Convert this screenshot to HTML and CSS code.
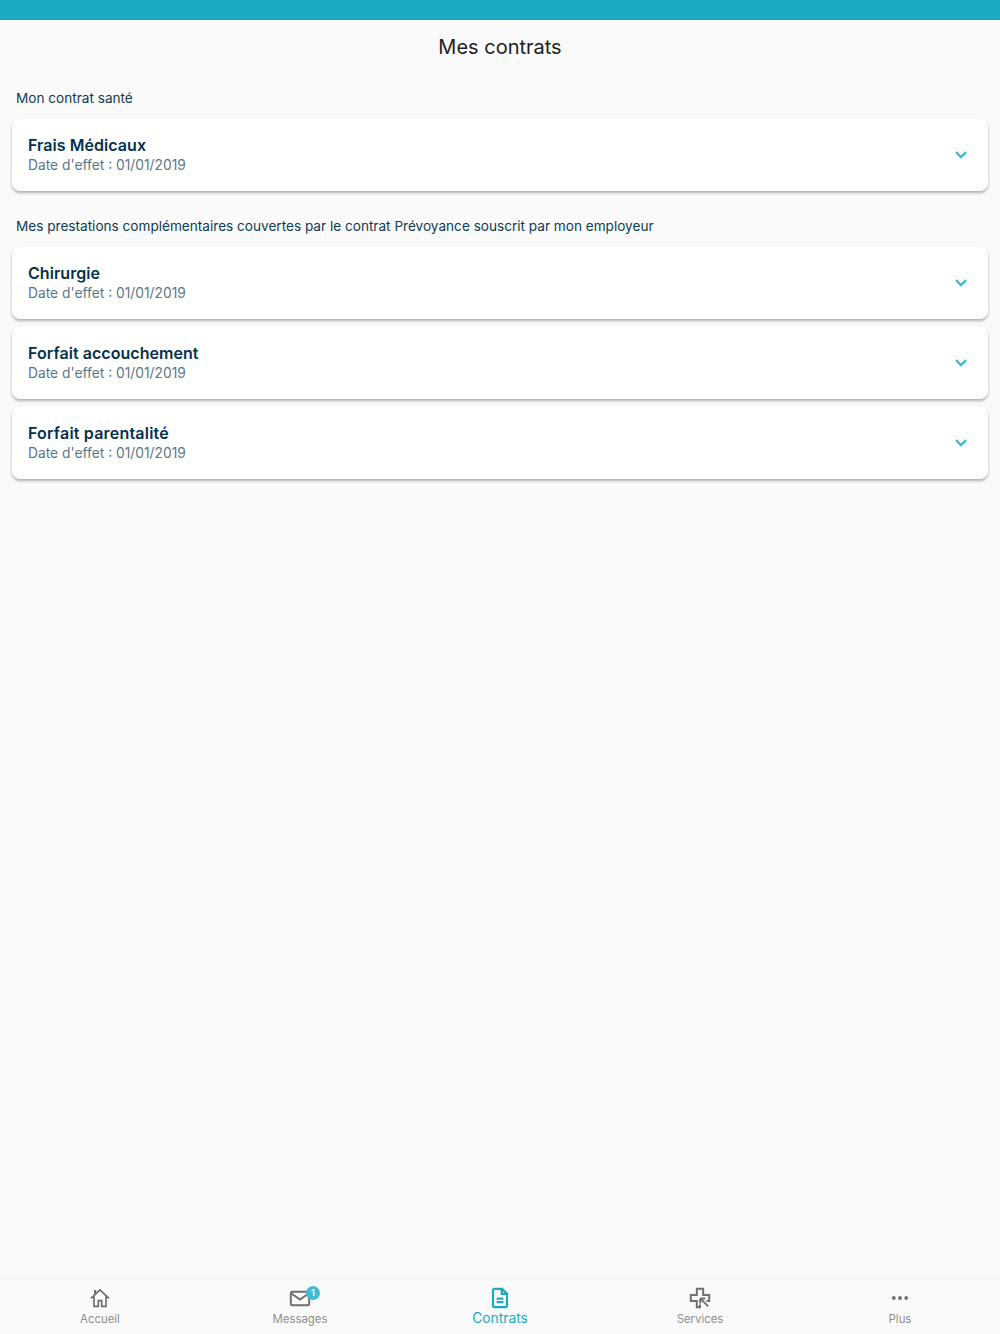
FILE: index.html
```html
<!DOCTYPE html>
<html lang="fr">
<head>
    <meta charset="UTF-8">
    <meta name="viewport" content="width=device-width, initial-scale=1.0">
    <title>Mes contrats</title>
    <link rel="stylesheet" href="styles.css">
</head>
<body>
    <div class="status-bar"></div>
    <header class="page-header">
        <h1>Mes contrats</h1>
    </header>
    <main class="content">
        <!-- Contrat santé -->
        <h2 class="section-label">Mon contrat santé</h2>
        <div class="card">
            <div class="card-text">
                <h3>Frais Médicaux</h3>
                <p>Date d'effet : 01/01/2019</p>
            </div>
            <svg class="chevron" viewBox="0 0 12 8"><path d="M1 1.200 6 6l5-4.800"/></svg>
        </div>

        <!-- Prévoyance -->
        <h2 class="section-label section-label-next">Mes prestations complémentaires couvertes par le contrat Prévoyance souscrit par mon employeur</h2>
        <div class="card">
            <div class="card-text">
                <h3>Chirurgie</h3>
                <p>Date d'effet : 01/01/2019</p>
            </div>
            <svg class="chevron" viewBox="0 0 12 8"><path d="M1 1.200 6 6l5-4.800"/></svg>
        </div>
        <div class="card">
            <div class="card-text">
                <h3>Forfait accouchement</h3>
                <p>Date d'effet : 01/01/2019</p>
            </div>
            <svg class="chevron" viewBox="0 0 12 8"><path d="M1 1.200 6 6l5-4.800"/></svg>
        </div>
        <div class="card">
            <div class="card-text">
                <h3 class="title-wide">Forfait parentalité</h3>
                <p>Date d'effet : 01/01/2019</p>
            </div>
            <svg class="chevron" viewBox="0 0 12 8"><path d="M1 1.200 6 6l5-4.800"/></svg>
        </div>
    </main>
    <nav class="tabs">
        <a href="#" class="tab">
            <span class="tab-icon">
                <svg class="thin" viewBox="0 0 24 24"><path d="M3 12.400 12 3.900l9 8.500M6 10v10.300h4.300v-5.600h3.400v5.600H18V10"/><path class="solid" d="M6 4h2.300v3L6 9.200Z"/></svg>
            </span>
            <span>Accueil</span>
        </a>
        <a href="#" class="tab">
            <span class="tab-icon">
                <svg viewBox="0 0 24 24"><rect x="2.800" y="5.800" width="18.400" height="13.400" rx="1.500"/><path d="m3.500 7.500 8.500 6 8.500-6"/></svg>
                <span class="badge">1</span>
            </span>
            <span>Messages</span>
        </a>
        <a href="#" class="tab tab-active">
            <span class="tab-icon">
                <svg viewBox="0 0 24 24"><path d="M6.400 2.800h7.800l4.800 4.800v12a1.600 1.600 0 0 1-1.600 1.600H6.600A1.600 1.600 0 0 1 5 19.600V4.400a1.600 1.600 0 0 1 1.400-1.600ZM13.800 3v5h5M8.600 12.600h6.800M8.600 16.200h6.800"/></svg>
            </span>
            <span>Contrats</span>
        </a>
        <a href="#" class="tab">
            <span class="tab-icon">
                <svg viewBox="0 0 24 24"><path d="M12 18.500v2.700H8.800v-6.300H2.800V9.100h6V2.800h6.400v6.300h6v5.800h-2.700M12.200 12.400l8 8M12.200 12.400v5M12.200 12.400h5"/></svg>
            </span>
            <span>Services</span>
        </a>
        <a href="#" class="tab">
            <span class="tab-icon">
                <svg viewBox="0 0 24 24"><circle class="solid" cx="5.800" cy="12" r="1.900"/><circle class="solid" cx="12" cy="12" r="1.900"/><circle class="solid" cx="18.200" cy="12" r="1.900"/></svg>
            </span>
            <span>Plus</span>
        </a>
    </nav>
</body>
</html>
```

FILE: styles.css
```css
html, body {
    height: 100%;
}
body {
    font-family: Inter, "Liberation Sans", sans-serif;
    margin: 0;
    padding: 0;
    background-color: #fafafa;
    display: flex;
    flex-direction: column;
}
.status-bar {
    height: 20px;
    background: #1aabc3;
    flex-shrink: 0;
}
.page-header {
    height: 54px;
    display: flex;
    align-items: center;
    justify-content: center;
    flex-shrink: 0;
}
.page-header h1 {
    margin: 0;
    font-size: 20px;
    font-weight: 400;
    color: #212121;
}
.content {
    flex: 1;
    padding: 14px 12px 0;
}
.section-label {
    margin: 0;
    padding: 0 4px;
    height: 20px;
    line-height: 20px;
    font-size: 13.6px;
    font-weight: 400;
    color: #0f3a52;
    margin-bottom: 11px;
}
.section-label-next {
    margin-top: 25px;
}
.card {
    height: 72px;
    box-sizing: border-box;
    padding: 0 16px;
    margin-bottom: 8px;
    background: #fff;
    border-radius: 8px;
    box-shadow: 0 2px 3px rgba(0, 0, 0, 0.3);
    display: flex;
    align-items: center;
    justify-content: space-between;
}
.card h3 {
    margin: 0;
    font-size: 16px;
    line-height: 20px;
    font-weight: 600;
    letter-spacing: 0.05px;
    color: #05304d;
}
.card .title-wide {
    letter-spacing: 0.2px;
}
.card p {
    margin: 0;
    font-size: 13.8px;
    line-height: 20px;
    color: #5c7688;
}
.chevron {
    width: 12px;
    height: 8px;
    margin-right: 5px;
    fill: none;
    stroke: #3fbcd1;
    stroke-width: 2.4;
}
.tabs {
    height: 56px;
    flex-shrink: 0;
    box-sizing: border-box;
    border-top: 1px solid #f0f0f0;
    display: grid;
    grid-template-columns: repeat(5, 1fr);
}
.tab {
    display: flex;
    flex-direction: column;
    align-items: center;
    padding-top: 7px;
    font-size: 11.4px;
    line-height: 16px;
    color: #8e8e8e;
    text-decoration: none;
}
.tab-icon {
    position: relative;
    width: 24px;
    height: 24px;
    margin-bottom: 1px;
}
.tab-icon svg {
    display: block;
    width: 24px;
    height: 24px;
    fill: none;
    stroke: #707070;
    stroke-width: 2;
}
.tab-icon .thin {
    stroke-width: 1.7;
}
.tab-icon .solid {
    fill: #707070;
    stroke: none;
}
.badge {
    position: absolute;
    top: 0;
    right: -8px;
    width: 14px;
    height: 14px;
    border-radius: 50%;
    background: #3fbcd1;
    color: #fff;
    font-size: 9px;
    font-weight: 600;
    line-height: 14px;
    text-align: center;
}
.tab-active {
    color: #1aabc3;
    font-size: 13.8px;
    line-height: 14px;
}
.tab-active .tab-icon svg {
    stroke: #1aabc3;
    stroke-width: 2.2;
}
```
